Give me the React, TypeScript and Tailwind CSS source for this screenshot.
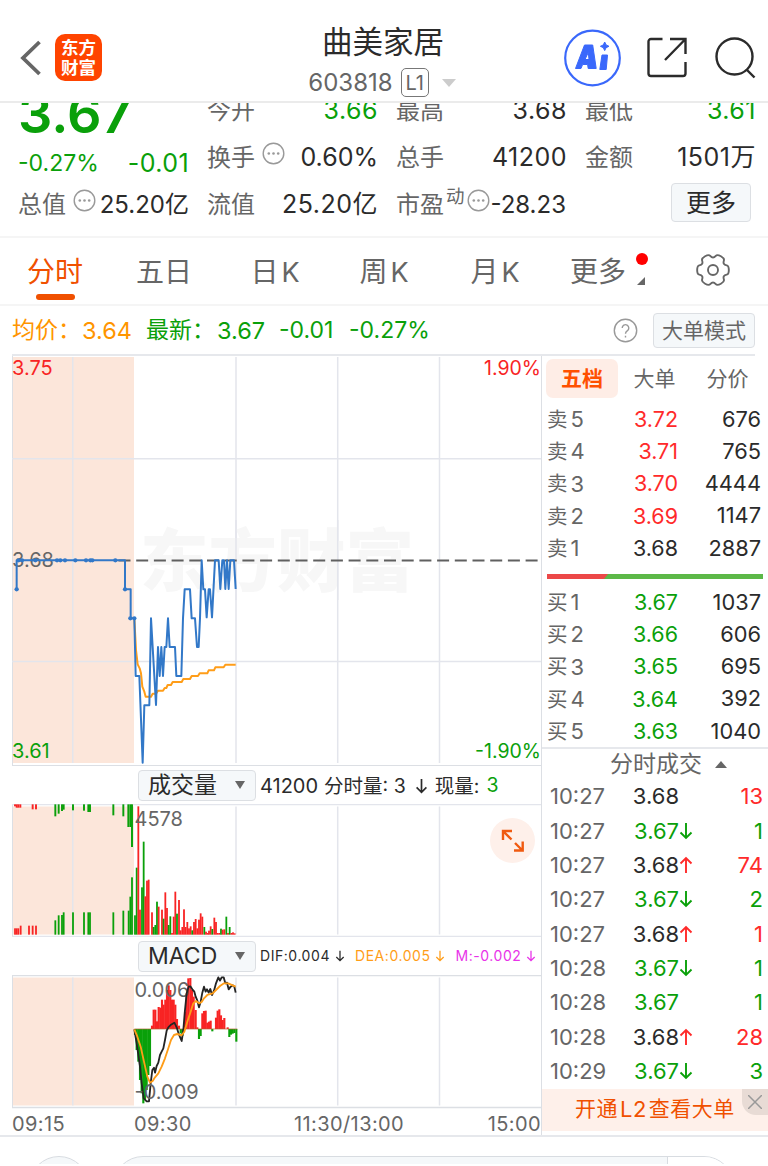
type Bar = [x: number, y: number, up: 0 | 1];

const RED = '#f82424';
const GREEN = '#0aa00a';

const asks = [
  { label: '卖', level: 5, price: '3.72', volume: 676, tone: 'text-[#ff2a2a]' },
  { label: '卖', level: 4, price: '3.71', volume: 765, tone: 'text-[#ff2a2a]' },
  { label: '卖', level: 3, price: '3.70', volume: 4444, tone: 'text-[#ff2a2a]' },
  { label: '卖', level: 2, price: '3.69', volume: 1147, tone: 'text-[#ff2a2a]' },
  { label: '卖', level: 1, price: '3.68', volume: 2887, tone: 'text-[#2b2b2b]' },
];

const bids = [
  { label: '买', level: 1, price: '3.67', volume: 1037, tone: 'text-[#0aa00a]' },
  { label: '买', level: 2, price: '3.66', volume: 606, tone: 'text-[#0aa00a]' },
  { label: '买', level: 3, price: '3.65', volume: 695, tone: 'text-[#0aa00a]' },
  { label: '买', level: 4, price: '3.64', volume: 392, tone: 'text-[#0aa00a]' },
  { label: '买', level: 5, price: '3.63', volume: 1040, tone: 'text-[#0aa00a]' },
];

const trades = [
  { time: '10:27', price: '3.68', dir: '', volume: 13, buy: true },
  { time: '10:27', price: '3.67', dir: 'down', volume: 1, buy: false },
  { time: '10:27', price: '3.68', dir: 'up', volume: 74, buy: true },
  { time: '10:27', price: '3.67', dir: 'down', volume: 2, buy: false },
  { time: '10:27', price: '3.68', dir: 'up', volume: 1, buy: true },
  { time: '10:28', price: '3.67', dir: 'down', volume: 1, buy: false },
  { time: '10:28', price: '3.67', dir: '', volume: 1, buy: false },
  { time: '10:28', price: '3.68', dir: 'up', volume: 28, buy: true },
  { time: '10:29', price: '3.67', dir: 'down', volume: 3, buy: false },
];

// Series are stored at 3x resolution
const priceLine =
  '50,208 50,121 375,121 375,208 392,208 392,295 403,295 407,468 418,468 428,728 433,556 448,556 453,295 468,555 474,381 479,468 484,381 489,468 494,381 499,381 504,295 509,381 525,381 529,468 544,468 549,295 554,208 570,208 575,295 585,295 591,381 596,381 600,295 605,121 610,208 615,208 620,292 626,208 630,208 636,292 645,121 656,121 661,207 667,121 672,121 676,207 681,121 686,207 691,121 702,121 707,207';
const avgLine =
  '403,295 408,390 413,433 419,445 423,460 427,500 433,515 437,530 453,530 458,521 468,521 474,512 489,512 494,504 499,504 503,495 513,495 518,486 545,486 550,477 570,477 575,468 594,468 599,460 622,460 626,451 642,451 646,442 671,442 676,434 707,434';
const priceDots = [[50, 208], [56, 121], [66, 121], [106, 121], [171, 121], [181, 121], [195, 121], [226, 121], [258, 121], [271, 121], [277, 121], [346, 121], [375, 208], [391, 295], [403, 295]];

const preTop: Bar[] = [
  [45, 124, 1], [50, 128, 1], [55, 128, 1], [61, 128, 1], [98, 133, 1], [108, 133, 1],
  [166, 154, 0], [176, 146, 0], [186, 138, 0], [191, 134, 0], [219, 136, 0], [252, 137, 0], [265, 141, 0], [270, 141, 0],
  [340, 151, 0], [370, 154, 0], [385, 186, 0], [391, 186, 0], [396, 246, 0],
];

const volumeBars: Bar[] = [
  [45, 490, 1], [50, 490, 1], [55, 490, 1], [62, 482, 1], [87, 482, 1], [98, 482, 1], [108, 482, 1],
  [166, 466, 0], [176, 451, 0], [186, 450, 0], [191, 442, 0], [219, 442, 0], [252, 442, 0], [265, 442, 0], [270, 442, 0],
  [340, 442, 0], [370, 437, 0], [386, 437, 0], [391, 395, 0], [396, 337, 0],
  [405, 451, 0], [410, 308, 0], [415, 124, 1], [420, 434, 1], [426, 367, 0], [431, 230, 0], [436, 394, 1], [441, 347, 1],
  [446, 344, 1], [456, 442, 1], [461, 486, 0], [466, 480, 0], [471, 410, 0], [476, 425, 1], [486, 434, 1], [491, 461, 0],
  [496, 382, 1], [501, 429, 1], [506, 480, 0], [511, 454, 0], [516, 504, 1], [521, 455, 1], [526, 380, 1], [531, 446, 0],
  [537, 405, 1], [542, 496, 1], [547, 486, 1], [552, 433, 1], [557, 486, 1], [562, 471, 1], [567, 490, 1], [572, 484, 1],
  [577, 496, 0], [582, 471, 1], [587, 462, 1], [592, 490, 1], [597, 464, 1], [602, 445, 1], [607, 455, 1], [613, 486, 0],
  [618, 500, 1], [623, 504, 1], [627, 497, 1], [632, 484, 1], [637, 492, 0], [643, 458, 1], [648, 471, 1], [653, 504, 1],
  [658, 504, 1], [663, 491, 0], [668, 494, 1], [673, 493, 1], [679, 455, 0], [684, 504, 1], [689, 486, 0], [694, 504, 1],
  [699, 502, 1], [704, 505, 1],
];

const macdBars: Bar[] = [
  [405, 285, 0], [410, 330, 0], [415, 365, 0], [420, 420, 0], [425, 460, 0], [430, 490, 0], [435, 480, 0], [440, 450, 0],
  [445, 405, 0], [450, 378, 0], [456, 257, 1], [461, 209, 1], [466, 209, 1], [471, 244, 1], [476, 201, 1], [481, 203, 1],
  [486, 179, 1], [491, 194, 1], [496, 179, 1], [501, 150, 1], [506, 136, 1], [511, 150, 1], [516, 179, 1], [521, 179, 1],
  [526, 194, 1], [531, 237, 1], [537, 257, 1], [542, 280, 0], [547, 288, 0], [555, 215, 1], [560, 160, 1], [565, 115, 1],
  [571, 114, 1], [576, 150, 1], [581, 170, 1], [587, 210, 1], [592, 262, 1], [597, 297, 0], [602, 288, 0], [607, 220, 1],
  [612, 213, 1], [617, 212, 1], [622, 248, 1], [627, 245, 1], [632, 242, 1], [637, 274, 0], [648, 233, 1], [653, 212, 1],
  [658, 208, 1], [663, 226, 1], [668, 240, 1], [673, 234, 1], [683, 262, 1], [688, 291, 0], [693, 284, 0], [698, 281, 0],
  [703, 279, 0], [709, 305, 0],
];
const difLine =
  '403,268 410,310 420,380 425,430 431,475 440,484 447,484 452,430 457,390 462,383 465,398 470,378 475,368 480,345 485,335 490,325 495,300 500,272 505,262 513,254 523,248 530,262 537,284 545,303 550,270 555,210 560,160 566,140 571,139 577,148 583,155 587,170 592,182 597,202 602,185 607,158 612,140 617,155 621,148 626,158 631,147 636,165 642,152 648,130 655,112 660,122 665,112 671,112 676,130 681,128 686,148 692,140 698,136 703,140 707,158';
const deaLine =
  '403,268 412,290 422,320 432,365 442,410 450,428 458,423 465,412 475,400 485,380 495,355 505,325 513,300 522,285 532,282 545,286 553,275 562,245 572,215 580,190 588,183 597,190 605,186 612,175 622,165 638,160 648,150 660,138 672,130 685,130 698,136 707,140';

function Bars({ data, base, width }: { data: Bar[]; base: number; width: number }) {
  return (
    <>
      {data.map(([x, y, up], i) => (
        <rect key={i} x={x - width / 2} y={Math.min(y, base)} width={width} height={Math.abs(y - base)} fill={up ? RED : GREEN} />
      ))}
    </>
  );
}

function GridLines({ top, bottom }: { top: number; bottom: number }) {
  return (
    <>
      <rect x="13" y={top} width="121" height={bottom - top} fill="#fce6da" />
      <path d={`M72.8 ${top}V${bottom}M236 ${top}V${bottom}M337.7 ${top}V${bottom}M439.5 ${top}V${bottom}`} stroke="#e3e5ec" strokeWidth="1.5" />
      <path d={`M12.5 ${top - 2}V${bottom + 2}`} stroke="#dcdfe4" />
    </>
  );
}

// Six rounded teeth, smoothed through the midpoints of the corner points
function gearPath() {
  const pts: number[][] = [];
  for (let k = 0; k < 6; k++) {
    [[-15, 16.4], [15, 16.4], [24, 12.6], [36, 12.6]].forEach(([a, r]) => {
      const rad = ((k * 60 + a) * Math.PI) / 180;
      pts.push([r * Math.cos(rad), r * Math.sin(rad)]);
    });
  }
  const mid = (a: number[], b: number[]) => `${((a[0] + b[0]) / 2).toFixed(2)} ${((a[1] + b[1]) / 2).toFixed(2)}`;
  const start = mid(pts[pts.length - 1], pts[0]);
  const curves = pts.map((p, i) => `Q${p[0].toFixed(2)} ${p[1].toFixed(2)} ${mid(p, pts[(i + 1) % pts.length])}`);
  return `M${start}${curves.join('')}Z`;
}

function More() {
  return (
    <svg className="size-[23px] shrink-0" viewBox="0 0 23 23" fill="none" stroke="#999" strokeWidth="1.4">
      <circle cx="11.5" cy="11.5" r="10.3" />
      <g fill="#999" stroke="none">
        <circle cx="6.8" cy="11.5" r="1.3" />
        <circle cx="11.5" cy="11.5" r="1.3" />
        <circle cx="16.2" cy="11.5" r="1.3" />
      </g>
    </svg>
  );
}

function Arrow({ up = false, className = '' }: { up?: boolean; className?: string }) {
  return (
    <svg className={`shrink-0 ${className}`} viewBox="0 0 14 18" fill="none" stroke="currentColor" strokeWidth="1.9">
      <path d={up ? 'M7 17V2M1.5 7.5 7 2l5.5 5.5' : 'M7 1v15M1.5 10.5 7 16l5.5-5.5'} />
    </svg>
  );
}

function Stat({ label, value, tone = 'text-[#2b2b2b]' }: { label: string; value: string; tone?: string }) {
  return (
    <div className="flex items-center justify-between">
      <span className="text-[#666]">{label}</span>
      <span className={`-mr-[1px] text-[25px] tracking-[0.5px] ${tone}`}>{value}</span>
    </div>
  );
}

function Selector({ children }: { children: string }) {
  return (
    <div className="ml-[138px] flex h-[31px] w-[118px] shrink-0 items-center justify-between rounded-[4px] border border-[#dcdfe3] bg-[#f5f8fa] pl-[9px] pr-[10px] text-[23px] text-[#2b2b2b]">
      <span>{children}</span>
      <svg className="h-[8px] w-[10px]" viewBox="0 0 10 8"><path d="M0 0h10L5 8z" fill="#666" /></svg>
    </div>
  );
}

function BookRow({ row }: { row: (typeof asks)[number] }) {
  return (
    <div className="flex h-[32.25px] items-center text-[22px]">
      <span className="flex w-[56px] items-center gap-[3px] text-[#666]">
        <span className="pt-[2px] text-[20.5px]">{row.label}</span>
        <span>{row.level}</span>
      </span>
      <span className={`w-[75px] pt-[1px] text-right text-[21.5px] ${row.tone}`}>{row.price}</span>
      <span className="w-[83px] pt-[1px] text-right text-[21.8px] text-[#2b2b2b]">{row.volume}</span>
    </div>
  );
}

export default function App() {
  return (
    <div className="h-[1166px] w-[768px] overflow-hidden bg-white font-['Inter','Noto_Sans_CJK_SC',sans-serif] leading-none whitespace-nowrap">
      {/* Header */}
      <header className="relative z-10 flex h-[103px] border-b-2 border-[#ebebeb] bg-white">
        <div className="flex w-[302px] pt-[34px] pl-[20px]">
          <svg className="mt-[6px] h-[36px] w-[22px]" viewBox="0 0 22 36" fill="none" stroke="#666" strokeWidth="3.8">
            <path d="M19.5 2 3 18l16.5 16" />
          </svg>
          <div className="ml-[13px] flex size-[47px] flex-col items-center justify-center rounded-[10px] bg-[#ff4400] text-[17.5px] leading-[19.5px] font-bold text-white">
            <span>东方</span>
            <span>财富</span>
          </div>
        </div>
        <div className="flex w-[162px] flex-col items-center pt-[25px]">
          <h1 className="text-[30.5px] leading-[34px] text-[#2b2b2b]">曲美家居</h1>
          <div className="mt-[9px] flex h-[29px] items-center pr-[2px] text-[24px] text-[#666]">
            <span>603818</span>
            <span className="ml-[8px] flex h-[29px] w-[28px] items-center justify-center rounded-[5px] border border-[#777] text-[20px]">L1</span>
            <svg className="ml-[13px] h-[8px] w-[14px]" viewBox="0 0 14 8"><path d="M0 0h14L7 8z" fill="#ccc" /></svg>
          </div>
        </div>
        <svg className="ml-[99px] mt-[29px] size-[58px]" viewBox="0 0 58 58">
          <circle cx="29.5" cy="29" r="27.3" fill="none" stroke="#3a68fb" strokeWidth="2.2" />
          <path d="M21.5 16h8.2l3.500 23.500h-8l-.6-4h-5L18 39.500h-5.500zM25.300 23.500 22 30.500h4z" fill="#3a68fb" fillRule="evenodd" stroke="#3a68fb" strokeWidth="1" strokeLinejoin="round" />
          <path d="M39 26h5.500L43.200 40.500h-6.400zM41.700 13l1.400 2.900 2.900 1.400-2.900 1.400-1.400 2.900-1.400-2.900-2.900-1.400 2.900-1.400z" fill="#3a68fb" stroke="#3a68fb" strokeWidth="1" strokeLinejoin="round" />
        </svg>
        <svg className="ml-[25px] mt-[36px] size-[42px]" viewBox="0 0 42 42" fill="none" stroke="#2b2b2b" strokeWidth="2.4">
          <path d="M16.5 3H5a2.500 2.500 0 0 0-2.500 2.500v32A2.500 2.500 0 0 0 5 40h32a2.500 2.500 0 0 0 2.500-2.500V26M24 3h15.500v15M39.500 3 19 24" />
        </svg>
        <svg className="ml-[25px] mt-[36px] size-[44px]" viewBox="0 0 44 44" fill="none" stroke="#2b2b2b" strokeWidth="2.4">
          <circle cx="21.5" cy="20.5" r="18" />
          <path d="m33.5 33.5 8 8" />
        </svg>
      </header>

      {/* Quote summary, scrolled a little under the header */}
      <section className="-mt-[16px] grid h-[151px] grid-cols-[170px_170px_170px_170px] grid-rows-[47px_47px_47px] gap-x-[19px] border-b-2 border-[#f5f5f5] pl-[18px] text-[24px]">
        <div className="flex items-center text-[54px] font-semibold text-[#0aa00a]"><span className="mt-[6px]">3.67</span></div>
        <Stat label="今开" value="3.66" tone="text-[#0aa00a]" />
        <Stat label="最高" value="3.68" />
        <Stat label="最低" value="3.61" tone="text-[#0aa00a]" />

        <div className="flex items-center justify-between pt-[12px] text-[#0aa00a]">
          <span className="text-[23px]">-0.27%</span>
          <span className="-mr-[1px] text-[25px] tracking-[0.4px]">-0.01</span>
        </div>
        <div className="flex items-center text-[#666]">
          <span>换手</span>
          <div className="mb-[9px] ml-[7px]"><More /></div>
          <span className="-mr-[1px] ml-auto text-[25px] text-[#2b2b2b]">0.60%</span>
        </div>
        <Stat label="总手" value="41200" />
        <Stat label="金额" value="1501万" />

        <div className="flex items-center text-[#666]">
          <span>总值</span>
          <div className="mb-[9px] ml-[7px]"><More /></div>
          <span className="-mr-[1px] ml-auto text-[#2b2b2b]">25.20亿</span>
        </div>
        <Stat label="流值" value="25.20亿" />
        <div className="flex items-center text-[#666]">
          <span>市盈</span>
          <span className="mb-[16px] ml-[2px] text-[18.5px]">动</span>
          <div className="mb-[9px] ml-[2px]"><More /></div>
          <span className="ml-auto text-[#2b2b2b]">-28.23</span>
        </div>
        <div className="flex items-center justify-end pr-[4px] pb-[4px]">
          <button className="h-[39px] w-[80px] rounded-[4px] border border-[#dcdfe3] bg-[#f5f8fa] pt-[1px] text-[25px] text-[#2b2b2b]">更多</button>
        </div>
      </section>

      {/* Period tabs */}
      <nav className="grid h-[68px] grid-cols-[110px_108px_114px_106px_114px_94px_122px] border-b-2 border-[#f5f5f5] text-[28px] text-[#666]">
        <div className="flex flex-col items-center pt-[20px] text-[#f05000]">
          <span>分时</span>
          <span className="mt-[8px] h-[6px] w-[39px] rounded-full bg-[#f05000]" />
        </div>
        <div className="pt-[20px] text-center">五日</div>
        <div className="pt-[20px] text-center">日<span className="ml-[3px] text-[27px]">K</span></div>
        <div className="pt-[20px] pr-[2px] text-center">周<span className="ml-[3px] text-[27px]">K</span></div>
        <div className="pt-[20px] text-center">月<span className="ml-[3px] text-[27px]">K</span></div>
        <div className="relative pt-[20px] pr-[2px] text-center">
          更多
          <span className="absolute top-[15px] -right-[2px] size-[12px] rounded-full bg-[#ff0000]" />
          <svg className="absolute top-[39px] right-[1px] size-[8px]" viewBox="0 0 8 8"><path d="M8 0v8H0z" fill="#666" /></svg>
        </div>
        <div className="flex justify-center pt-[16px] pl-[12px]">
          <svg className="h-[32px] w-[34px]" viewBox="-17 -16 34 32" fill="none" stroke="#666" strokeWidth="1.9">
            <path d={gearPath()} />
            <circle r="5" />
          </svg>
        </div>
      </nav>

      <div className="ml-[12px] flex h-[50px] w-[743px] items-center border-b-2 border-[#e6e8ec] pt-[1px] text-[23px] text-[#0aa00a]">
        <span className="w-[70px] text-[#ff9500]">均价：</span>
        <span className="w-[64px] text-[23.5px] text-[#ff9500]">3.64</span>
        <span className="w-[71px]">最新：</span>
        <span className="w-[62px] text-[23.5px]">3.67</span>
        <span className="w-[70px]">-0.01</span>
        <span>-0.27%</span>
        <svg className="ml-auto size-[25px]" viewBox="0 0 25 25" fill="none" stroke="#999" strokeWidth="1.4">
          <circle cx="12.5" cy="12.5" r="11.2" />
          <path d="M9.2 10a3.300 3.300 0 1 1 5 2.800c-1.200.8-1.700 1.400-1.700 3M12.500 17.700v1.900" />
        </svg>
        <button className="ml-[15px] h-[35px] w-[102px] rounded-[4px] border border-[#dcdfe3] bg-[#f5f8fa] text-[21px] text-[#666]">大单模式</button>
      </div>

      <main className="flex h-[781px] border-b-2 border-[#e6e8ec]">
        {/* Charts */}
        <div className="w-[542px] border-r border-[#dcdfe4]">
          <svg className="ml-[12px] block h-[410px] w-[529px]" viewBox="12 356 529 410">
            <GridLines top={357} bottom={763} />
            <path d="M12 458.7H541M12 661.5H541" stroke="#e3e5ec" strokeWidth="1.5" />
            <text x="140" y="586" fontSize="68.5" fontWeight="900" fill="#f7f7f7">东方财富</text>
            <path d="M236 520V600M337.7 520V600" stroke="#e3e5ec" strokeWidth="1.5" />
            <path d="M118.5 560.5H541" stroke="#606060" strokeWidth="2" strokeDasharray="12 5.7" />
            <text x="12" y="567" fontSize="20" fill="#666">3.68</text>
            <g transform="translate(0 520) scale(0.33333)" fill="none" strokeLinejoin="round">
              <polyline points={avgLine} stroke="#ff9d18" strokeWidth="6" />
              <polyline points={priceLine} stroke="#3278c8" strokeWidth="6" />
              {priceDots.map(([x, y]) => (
                <circle key={`${x}-${y}`} cx={x} cy={y} r="6.5" fill="#3278c8" />
              ))}
            </g>
            <text x="12" y="375" fontSize="20" fill={RED}>3.75</text>
            <text x="541" y="375" fontSize="19.5" fill={RED} textAnchor="end">1.90%</text>
            <text x="12" y="758" fontSize="20" fill={GREEN}>3.61</text>
            <text x="541" y="758" fontSize="19.5" fill={GREEN} textAnchor="end">-1.90%</text>
            <path d="M12 765.5H541" stroke="#dcdfe4" />
          </svg>

          <div className="flex h-[38px] items-center text-[19.5px] text-[#2b2b2b]">
            <Selector>成交量</Selector>
            <span className="mt-[1px] ml-[4px] text-[20px]">41200</span>
            <span className="mt-[3px] ml-[6px]">分时量: 3</span>
            <Arrow className="mt-[2px] mr-[7px] ml-[9px] h-[16px] w-[13px]" />
            <span className="mt-[3px]">现量:</span>
            <span className="mt-[1px] ml-[7px] text-[#0aa00a]">3</span>
          </div>

          <div className="relative">
            <svg className="ml-[12px] block h-[133px] w-[529px]" viewBox="12 804 529 133">
              <GridLines top={806.5} bottom={934.5} />
              <path d="M12 804.5H541M12 936.5H541" stroke="#e3e5ec" strokeWidth="1.5" />
              <g transform="translate(0 765) scale(0.33333)">
                <Bars data={preTop} base={118} width={5.8} />
                <Bars data={volumeBars} base={509} width={5.4} />
              </g>
              <text x="134.5" y="826" fontSize="20" fill="#666">4578</text>
            </svg>
            <button className="absolute top-[14px] right-[6px] flex size-[45px] items-center justify-center rounded-full bg-[#fef0ea]">
              <svg className="size-[24px]" viewBox="0 0 24 24" fill="none" stroke="#f05a10" strokeWidth="2.4">
                <path d="M2 11V2h9M2.5 2.5l8 8M14 14l7.500 7.500M21.700 12.500v9H13" />
              </svg>
            </button>
          </div>

          <div className="flex h-[38px] items-center text-[14px] tracking-[0.55px] text-[#2b2b2b]">
            <div className="tracking-normal"><Selector>MACD</Selector></div>
            <span className="ml-[4px]">DIF:0.004</span>
            <Arrow className="ml-[5px] h-[12px] w-[10px]" />
            <span className="ml-[10px] text-[#ff9d18]">DEA:0.005</span>
            <Arrow className="ml-[5px] h-[12px] w-[10px] text-[#ff9d18]" />
            <span className="ml-[10px] text-[#e833e8]">M:-0.002</span>
            <Arrow className="ml-[5px] h-[12px] w-[10px] text-[#e833e8]" />
          </div>

          <svg className="ml-[12px] block h-[134px] w-[529px]" viewBox="12 975 529 134">
            <GridLines top={977.5} bottom={1105.5} />
            <path d="M12 975.5H541M12 1107.5H541" stroke="#dcdfe4" strokeWidth="1.5" />
            <g transform="translate(0 940) scale(0.33333)">
              <Bars data={macdBars} base={267} width={6.4} />
            </g>
            <text x="134.5" y="997" fontSize="20" fill="#666">0.006</text>
            <g transform="translate(0 940) scale(0.33333)" fill="none" strokeLinejoin="round">
              <path d="M403 267H712" stroke="#b06030" strokeWidth="2" />
              <polyline points={difLine} stroke="#242424" strokeWidth="5.5" />
              <polyline points={deaLine} stroke="#ff9d18" strokeWidth="5.5" />
            </g>
            <text x="134.5" y="1099" fontSize="20" fill="#666">-0.009</text>
          </svg>

          <div className="flex h-[28px] items-center pt-[1px] pl-[12px] text-[20px] tracking-[0.4px] text-[#666]">
            <span className="w-[122px]">09:15</span>
            <span className="w-[160px]">09:30</span>
            <span>11:30/13:00</span>
            <span className="ml-auto">15:00</span>
          </div>
        </div>

        {/* Order book */}
        <aside className="w-[226px]">
          <div className="flex h-[47px] items-start pt-[3px] pl-[4px] text-[21px] text-[#666]">
            <span className="flex h-[39px] w-[72px] items-center justify-center rounded-[7px] bg-[#feede6] font-bold text-[#ff5000]">五档</span>
            <span className="flex h-[39px] w-[73px] items-center justify-center">大单</span>
            <span className="flex h-[39px] w-[73px] items-center justify-center">分价</span>
          </div>
          <div className="h-[162px] pl-[5px]">
            {asks.map(row => <BookRow key={row.level} row={row} />)}
          </div>
          <div className="mt-[9px] ml-[5px] flex h-[5px] w-[216px] bg-[#5cb848]">
            <div className="h-full w-[61px] bg-[#ec4848] [clip-path:polygon(0_0,100%_0,57px_100%,0_100%)]" />
          </div>
          <div className="mt-[7px] h-[161px] pl-[5px]">
            {bids.map(row => <BookRow key={row.level} row={row} />)}
          </div>

          <div className="flex h-[32px] items-center border-t-2 border-[#e6e8ec] pl-[68px] text-[23px] text-[#666]">
            <span>分时成交</span>
            <svg className="ml-[13px] h-[7px] w-[12px]" viewBox="0 0 12 7"><path d="M0 7h12L6 0z" fill="#666" /></svg>
          </div>
          <div className="h-[310px]">
            {trades.map((t, i) => (
              <div key={i} className="flex h-[34.35px] items-center text-[22px]">
                <span className="w-[70px] pl-[8px] text-[#666]">{t.time}</span>
                <span className={`w-[67px] text-right ${t.price === '3.68' ? 'text-[#2b2b2b]' : 'text-[#0aa00a]'}`}>{t.price}</span>
                <span className="w-[15px]">
                  {t.dir && <Arrow up={t.dir === 'up'} className={`h-[18px] w-[14px] ${t.buy ? 'text-[#ff2a2a]' : 'text-[#0aa00a]'}`} />}
                </span>
                <span className={`w-[69px] text-right ${t.buy ? 'text-[#ff2a2a]' : 'text-[#0aa00a]'}`}>{t.volume}</span>
              </div>
            ))}
          </div>
          <div className="relative flex h-[42px] items-center bg-[#fef0ea] pb-[3px] pl-[33px] text-[21px] tracking-[0.5px] text-[#f05000]">
            <span>开通</span>
            <span className="mx-[2px] text-[22px]">L2</span>
            <span>查看大单</span>
            <span className="absolute top-0 right-0 flex size-[26px] items-center justify-center rounded-bl-[14px] bg-[#e8dbd5]">
              <svg className="size-[14px]" viewBox="0 0 14 14" stroke="#999" strokeWidth="1.5"><path d="m0 0 14 14M14 0 0 14" /></svg>
            </span>
          </div>
        </aside>
      </main>

      {/* Top edge of the bottom bar */}
      <footer className="mt-[19px] flex h-[8px] items-start overflow-hidden">
        <div className="ml-[29px] size-[60px] shrink-0 rounded-full border border-[#d8dce1] bg-[#f5f8fa]" />
        <div className="ml-[24px] flex h-[60px] w-[621px] shrink-0 overflow-hidden rounded-full border border-[#d8dce1] bg-[#f5f8fa]">
          <div className="ml-auto h-full w-[66px] border-l border-[#d8dce1] bg-white" />
        </div>
      </footer>
    </div>
  );
}
